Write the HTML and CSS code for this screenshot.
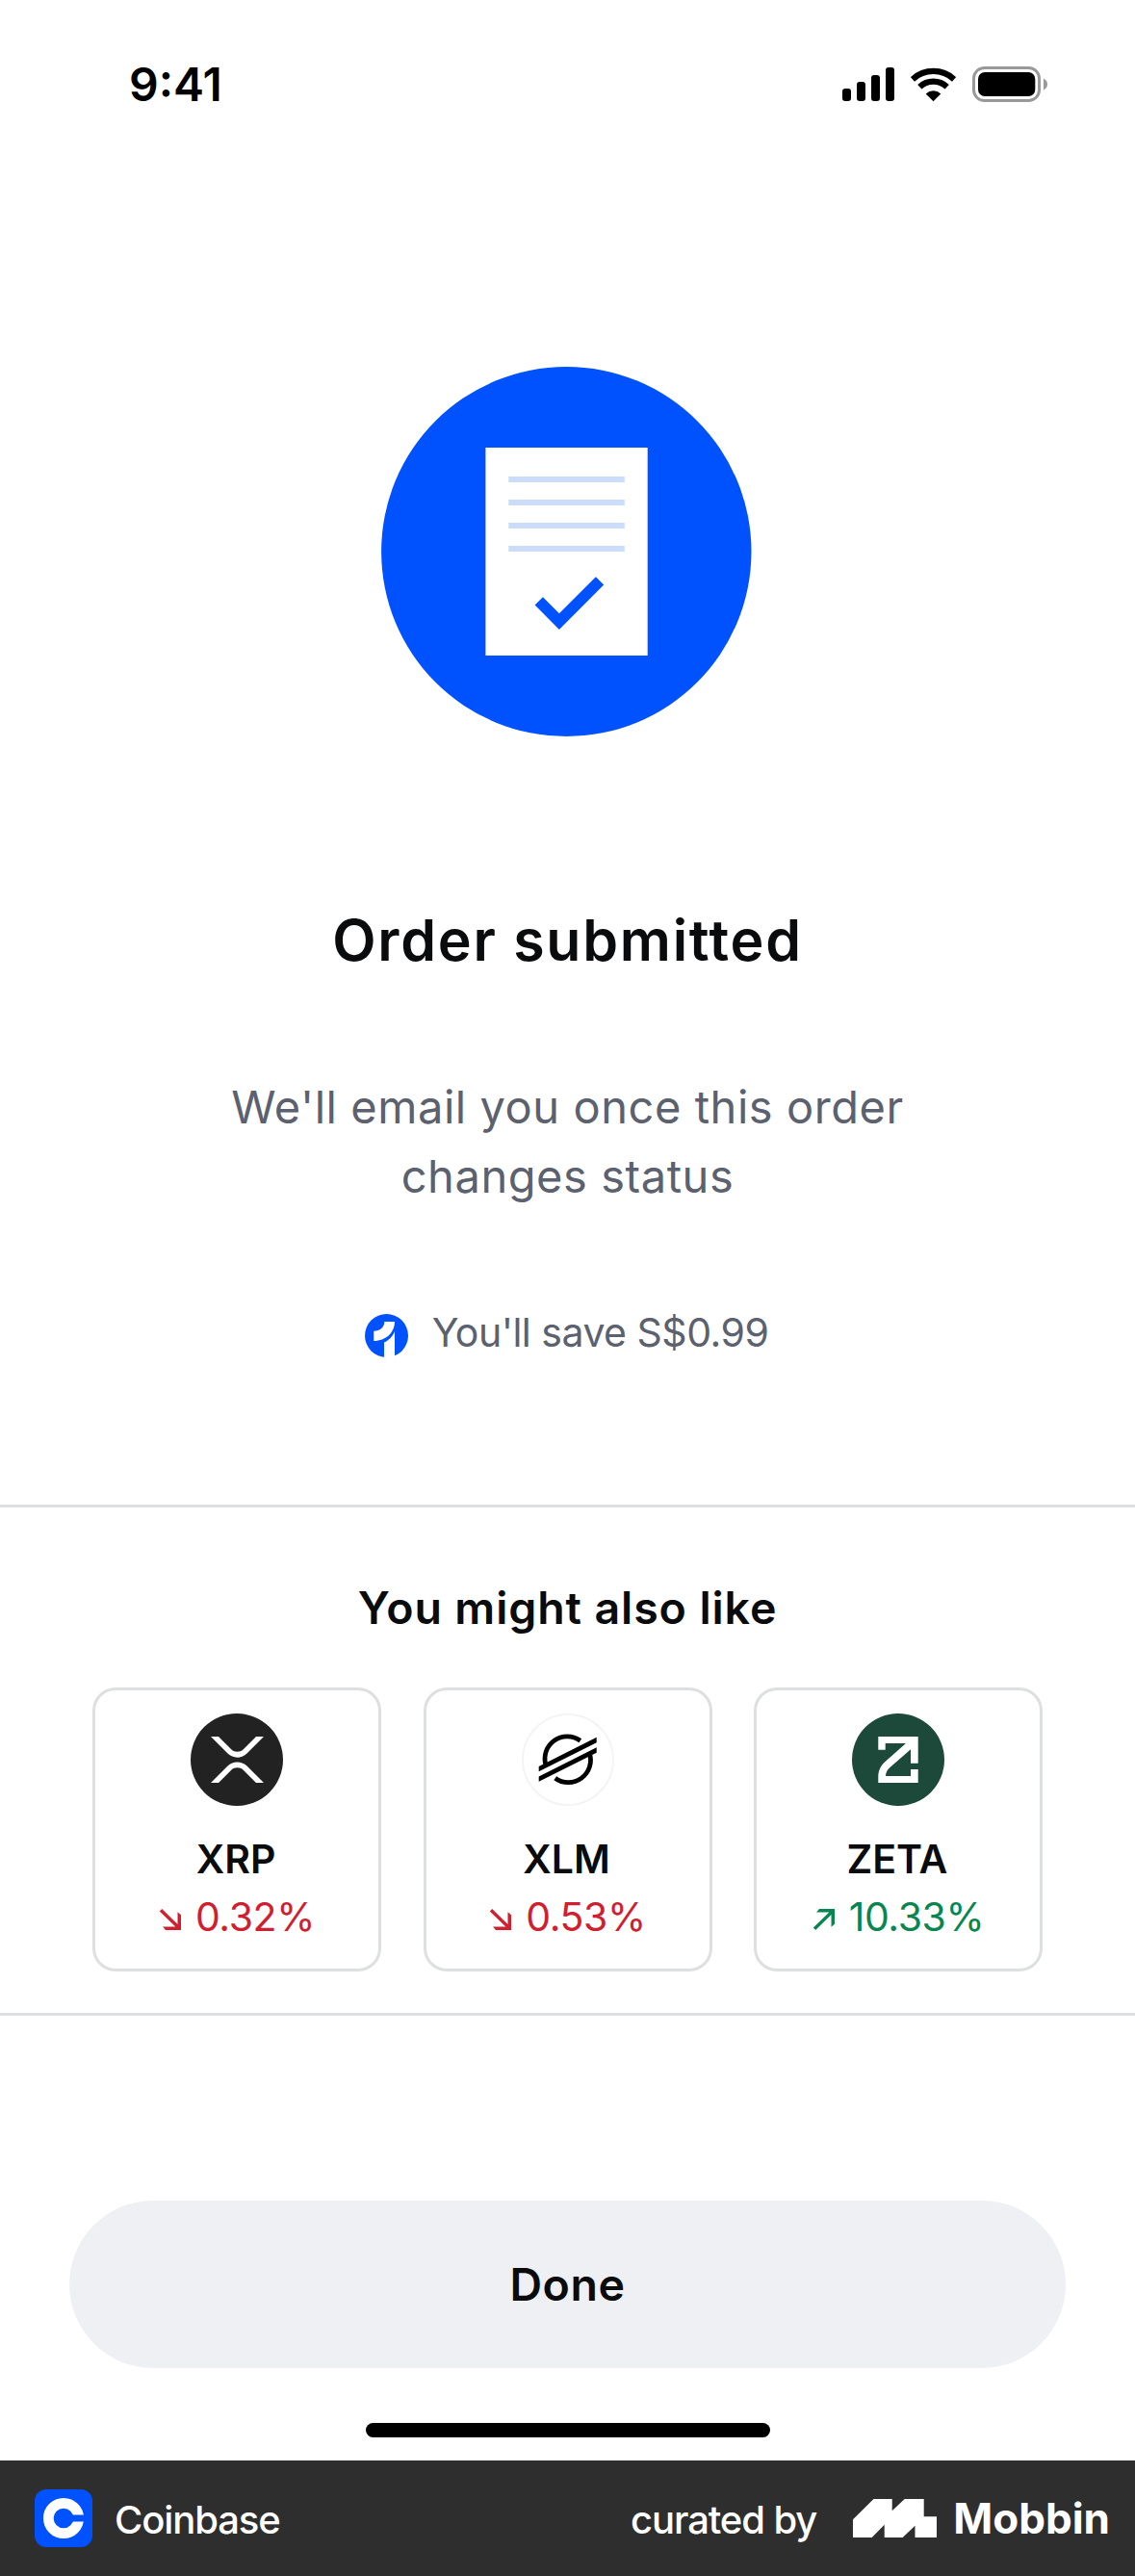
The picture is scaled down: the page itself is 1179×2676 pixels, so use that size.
FILE: index.html
```html
<!DOCTYPE html>
<html lang="en">
<head>
<meta charset="utf-8">
<title>Order submitted</title>
<link rel="stylesheet" href="styles.css">
</head>
<body>
<main class="screen">
  <header class="status">
    <span class="time">9:41</span>
    <div class="status-icons">
      <svg class="signal" width="54" height="36" viewBox="0 0 54 36"><rect y="22" width="9" height="13" rx="3"/><rect x="15" y="15" width="9" height="20" rx="3"/><rect x="30" y="8" width="9" height="27" rx="3"/><rect x="45" width="9" height="35" rx="3"/></svg>
      <svg class="wifi" width="47" height="36" viewBox="0 0 47 36"><path d="M1.9 12.4A31.8 31.8 0 0 1 45.1 12.4M9.3 20.3A20.8 20.8 0 0 1 37.7 20.3" fill="none" stroke="#000" stroke-width="6.2"/><path d="M23.5 35.3L15.7 27.4A11.5 11.5 0 0 1 31.3 27.4Z"/></svg>
      <svg class="battery" width="78" height="37" viewBox="0 0 78 37"><rect x="1.5" y="1.5" width="68" height="34" rx="11" fill="none" stroke="#999" stroke-width="3"/><rect x="6" y="6" width="59.300" height="25" rx="7"/><path d="M74 12.500V24.500C76.700 23.200 78 21 78 18.500S76.700 13.800 74 12.500Z" fill="#999"/></svg>
    </div>
  </header>

  <section class="summary">
    <svg class="hero" width="385" height="384" viewBox="0 0 385 384"><ellipse cx="192.300" cy="192" rx="192.200" ry="192" fill="#0052ff"/><path fill="#fff" d="M108.400 84h168.300v216H108.400z"/><path fill="#cbdcfb" d="M132.300 114h120.500v6H132.300zM132.300 138h120.500v6H132.300zM132.300 162h120.500v6H132.300zM132.300 186h120.500v6H132.300z"/><path fill="#0052ff" d="M159.600 247.500l8.300-8.200 17 17 38-38 8.300 8.200-46.300 46.500z"/></svg>
    <h1 class="title">Order submitted</h1>
    <p class="message">We'll email you once this order<br>changes status</p>
    <div class="saving">
      <svg class="one" width="45" height="45" viewBox="0 0 45 45"><circle cx="22.500" cy="22.500" r="22.500" fill="#0052ff"/><path fill="#fff" d="M20.300 8H31C31 19 22 28 9.300 28V17.700C15.500 17.700 20.300 14 20.300 8ZM31 18V45H20V29.500C25 27.500 29 23 31 18Z"/></svg>
      <span class="saving-text">You'll save S$0.99</span>
    </div>
  </section>

  <section class="suggestions">
    <h2 class="subtitle">You might also like</h2>
    <div class="cards">
      <article class="card">
        <svg class="coin" width="96" height="96" viewBox="0 0 96 96"><circle cx="48" cy="48" r="48" fill="#222"/><path fill="#fff" d="M21 24h8l13.500 13.400c3 3 9 3 12 0L68 24h8L58.500 41.500c-5.500 5.500-14.500 5.500-20 0zM21 72h8l13.500-13.400c3-3 9-3 12 0L68 72h8L58.500 54.500c-5.500-5.500-14.500-5.500-20 0z"/></svg>
        <span class="symbol">XRP</span>
        <span class="change down"><svg width="24" height="24" viewBox="0 0 24 24"><path d="M19.500 4.200L23 7.200V23H7L4 19.600H17.300L.8 3.400 3.200 1 19.500 17Z"/></svg><span>0.32%</span></span>
      </article>
      <article class="card">
        <svg class="coin" width="96" height="96" viewBox="0 0 96 96"><circle cx="48" cy="48" r="47" fill="#fff" stroke="#f3f4f5" stroke-width="2"/><path fill="none" stroke="#000" stroke-width="4.800" d="M25.200 54.500A23.200 23.200 0 0 1 60.800 28.300M70.300 41A23.200 23.200 0 0 1 34.700 67.200"/><path d="M17.700 55L77.700 24.700V30.200L17.700 60.300ZM17.700 65.500L77.700 35.200V40.700L17.700 70.800Z"/></svg>
        <span class="symbol">XLM</span>
        <span class="change down"><svg width="24" height="24" viewBox="0 0 24 24"><path d="M19.500 4.200L23 7.200V23H7L4 19.600H17.300L.8 3.400 3.200 1 19.500 17Z"/></svg><span>0.53%</span></span>
      </article>
      <article class="card">
        <svg class="coin" width="96" height="96" viewBox="0 0 96 96"><circle cx="48" cy="48" r="48" fill="#1d493b"/><path fill="#fff" d="M27.300 24H68.700V51.700H61V37.300L39.500 56C36.500 58.700 35 61.500 35 65H61V58H68.700V72H27.300V66C27.300 59 30 54 34.500 50L56 31H34.700V37.700H27.300Z"/></svg>
        <span class="symbol">ZETA</span>
        <span class="change up"><svg width="24" height="24" viewBox="0 0 24 24"><path d="M19.500 19.800L23 16.800V1H7L4 4.400H17.300L.8 20.600 3.200 23 19.500 7Z"/></svg><span>10.33%</span></span>
      </article>
    </div>
  </section>

  <button class="done">Done</button>
  <div class="home-indicator"></div>
</main>
<footer class="footer">
  <svg class="app-icon" width="60" height="60" viewBox="0 0 60 60"><rect width="60" height="60" rx="12" fill="#0052ff"/><circle cx="30" cy="30" r="15.700" fill="none" stroke="#fff" stroke-width="10.700"/><path fill="#0052ff" d="M38 26.500H52V33.500H38Z"/></svg>
  <span class="app-name">Coinbase</span>
  <span class="curated">curated by</span>
  <svg class="mobbin-mark" width="87" height="40" viewBox="0 0 87 40"><path fill="#fff" d="M0 21.300L21.500 0H40.700V12.300L53.700 0H73.700V18.300H87V40H64.500V27.700L51.700 40H32.700V26.700L19.700 40H0Z"/></svg>
  <span class="mobbin">Mobbin</span>
</footer>
</body>
</html>
```
FILE: styles.css
```css
* { box-sizing: border-box; }

body {
  margin: 0;
  width: 1179px;
  background: #fff;
  color: #0a0b0d;
  font-family: Inter, "Liberation Sans", sans-serif;
}

svg { display: block; flex: none; }

.screen {
  display: flex;
  flex-direction: column;
  height: 2556px;
}

.status {
  display: flex;
  align-items: center;
  justify-content: space-between;
  height: 175px;
  padding: 0 91px 0 134px;
  color: #000;
}

.time { font-size: 48px; font-weight: 600; line-height: 60px; }

.status-icons { display: flex; align-items: center; gap: 17px; }

.summary {
  display: flex;
  flex-direction: column;
  align-items: center;
  padding: 206px 0 149px;
}

.hero { margin-right: 2px; }

.title {
  margin: 176px 0 0;
  font-size: 59px;
  font-weight: 600;
  line-height: 72px;
  letter-spacing: 1.750px;
}

.message {
  margin: 101px 0 0;
  color: #5b616e;
  font-size: 47px;
  line-height: 72px;
  letter-spacing: 0.550px;
  text-align: center;
}

.saving {
  display: flex;
  align-items: center;
  gap: 25px;
  margin: 96px 2px 0 0;
  color: #5b616e;
  font-size: 41px;
  line-height: 60px;
  letter-spacing: -0.500px;
}

.one { margin-top: 7px; }

.suggestions {
  padding: 74px 96px 43px;
  border-top: 3px solid #dedfe0;
  border-bottom: 3px solid #dedfe0;
}

.subtitle {
  margin: 0;
  font-size: 46.500px;
  font-weight: 600;
  line-height: 60px;
  letter-spacing: 0.900px;
  text-align: center;
}

.cards {
  display: flex;
  justify-content: space-between;
  margin-top: 53px;
}

.card {
  display: flex;
  flex-direction: column;
  align-items: center;
  width: 300px;
  height: 295px;
  padding-top: 24px;
  border: 3px solid #dedfe0;
  border-radius: 24px;
  font-size: 41px;
  line-height: 60px;
}

.symbol { margin: 25px 2px 0 0; font-weight: 600; }

.change {
  display: flex;
  align-items: center;
  gap: 14px;
  letter-spacing: -0.400px;
}

.change svg { margin-top: 5px; fill: currentColor; }
.down { color: #cf202f; }
.up { color: #098551; }

.done {
  margin: 192px 72px 0;
  height: 174px;
  padding: 0;
  border: 0;
  border-radius: 87px;
  background: #eef0f3;
  color: #0a0b0d;
  font: 600 46.500px/60px Inter, "Liberation Sans", sans-serif;
  letter-spacing: 0.600px;
}

.home-indicator {
  align-self: center;
  width: 420px;
  height: 15px;
  margin-top: 57px;
  border-radius: 7.500px;
  background: #000;
}

.footer {
  display: flex;
  align-items: center;
  height: 120px;
  padding: 0 26px 0 36px;
  background: #2e2e2e;
  color: #fff;
  font-size: 40px;
  line-height: 60px;
}

.app-name,
.curated {
  padding-top: 3px;
  font-weight: 500;
  letter-spacing: -1.100px;
}

.app-name { margin-left: 23px; }
.curated { margin-left: auto; }
.mobbin-mark { margin-left: 38px; }
.mobbin { margin-left: 17px; font-size: 44px; font-weight: 700; }
```
